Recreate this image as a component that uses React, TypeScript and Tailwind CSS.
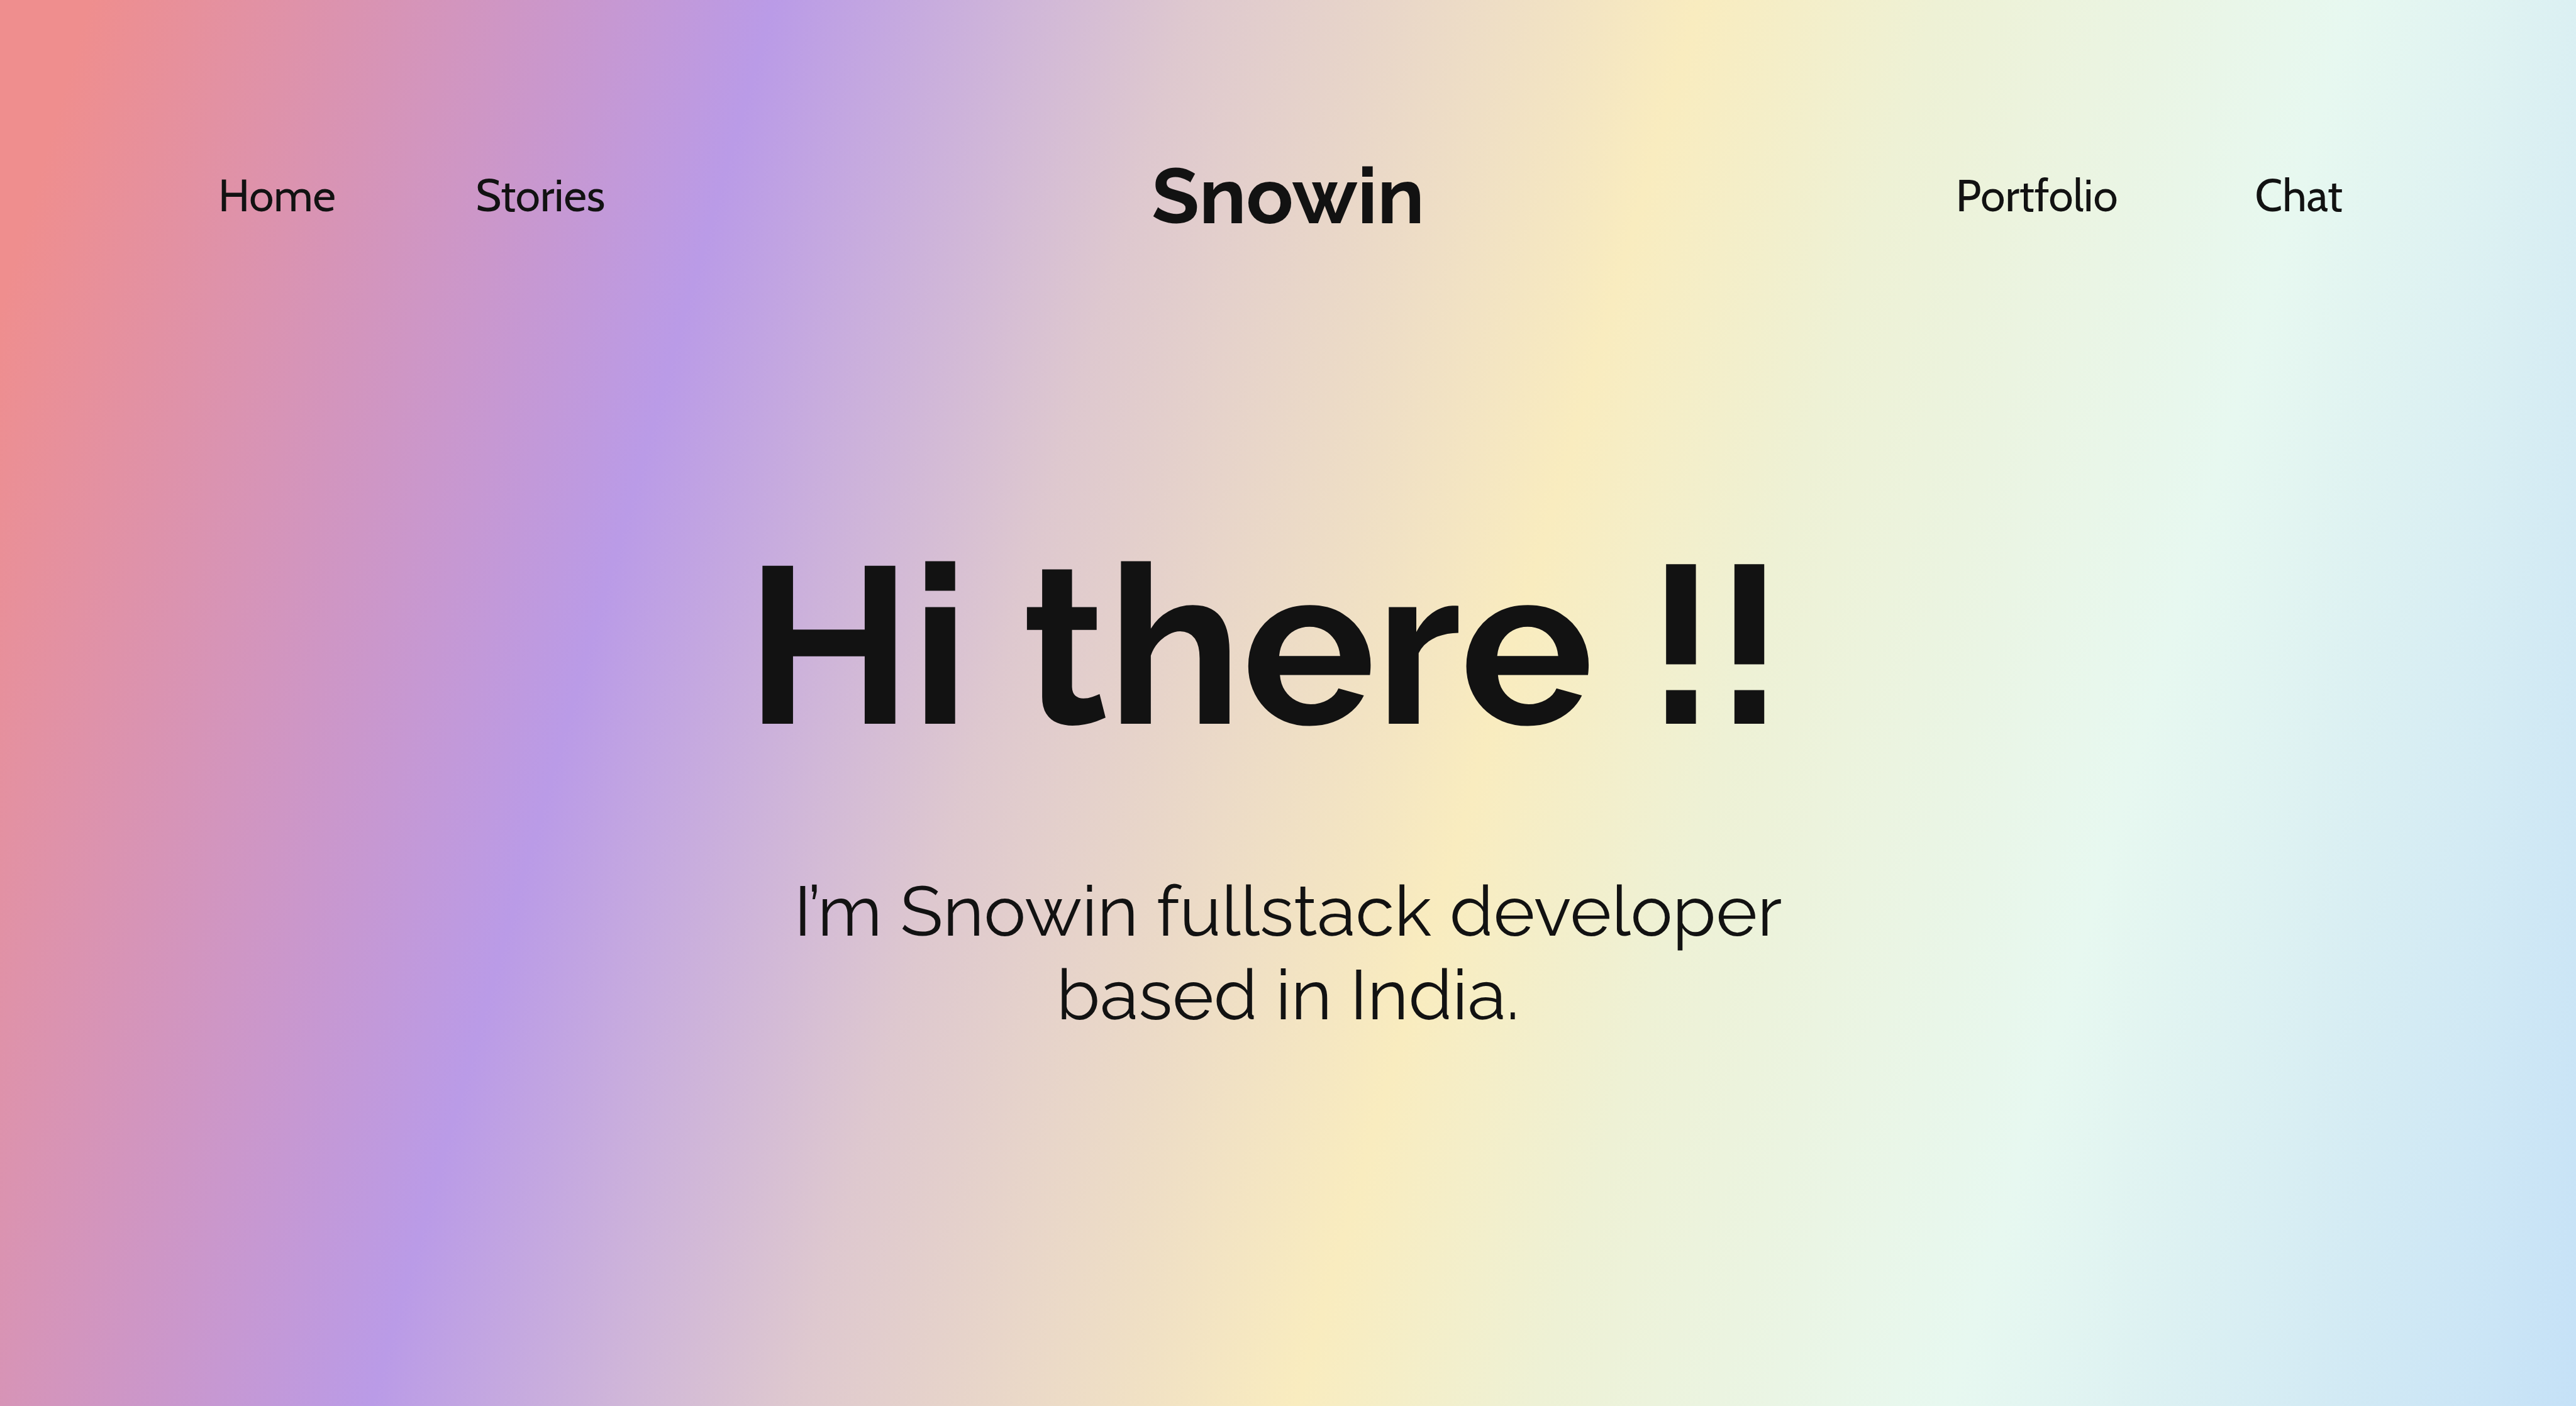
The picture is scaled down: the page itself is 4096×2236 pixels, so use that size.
const linkClass = "text-[71px] leading-[88px] hover:underline";

export default function App() {
  return (
    <div className="flex min-h-screen flex-col bg-[linear-gradient(106deg,#ef8e8e_3%,#ba9be7_26%,#dec8cf_40%,#f9ecbf_57%,#eef1d5_65%,#e7f8f0_79%,#c5e1f7_100%)] font-['Raleway','Lato',sans-serif] text-[#121212]">
      <header className="px-[347px] pt-[235px]">
        <nav
          aria-label="Main"
          className="grid grid-cols-[1fr_auto_1fr] items-center font-['Cabin','Lato',sans-serif]"
        >
          <div className="flex gap-[222px]">
            <a href="#home" className={linkClass}>Home</a>
            <a href="#stories" className={linkClass}>Stories</a>
          </div>
          <a
            href="#top"
            className="font-['Raleway','Lato',sans-serif] text-[124px] leading-[152px] font-bold"
          >
            Snowin
          </a>
          <div className="flex justify-end gap-[218px] pr-[24px]">
            <a href="#portfolio" className={linkClass}>Portfolio</a>
            <a href="#chat" className={linkClass}>Chat</a>
          </div>
        </nav>
      </header>
      <main className="flex flex-col items-center pt-[427px] text-center">
        <h1 className="pr-[74px] text-[354px] leading-[424px] font-bold">Hi there !!</h1>
        <p className="mt-[144px] text-[112px] leading-[133px]">
          I’m Snowin fullstack developer
          <br />
          based in India.
        </p>
      </main>
    </div>
  );
}
